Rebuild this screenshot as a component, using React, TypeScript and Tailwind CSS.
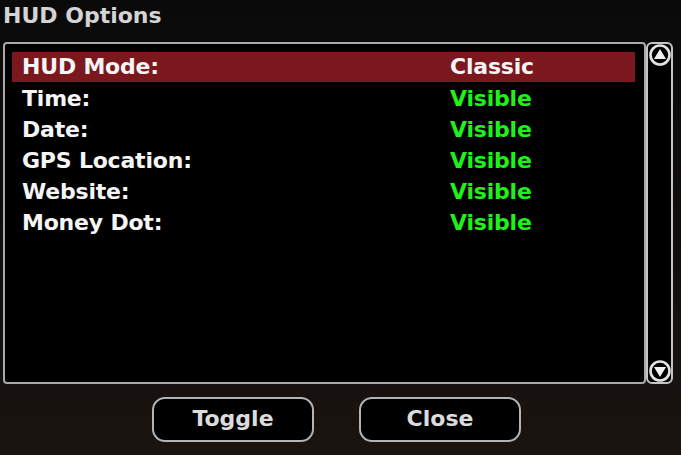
import React from "react";

type Row = { label: string; value: string; selected?: boolean };

const rows: Row[] = [
  { label: "HUD Mode:", value: "Classic", selected: true },
  { label: "Time:", value: "Visible" },
  { label: "Date:", value: "Visible" },
  { label: "GPS Location:", value: "Visible" },
  { label: "Website:", value: "Visible" },
  { label: "Money Dot:", value: "Visible" },
];

function ArrowButton({ dir }: { dir: "up" | "down" }) {
  return (
    <svg width="22" height="22" viewBox="0 0 22 22" className="block">
      <circle cx="11" cy="11" r="9.5" fill="#000" stroke="#e2e2e2" strokeWidth="2.6" />
      {dir === "up" ? (
        <polygon points="11,5 17,15 5,15" fill="#f0f0f0" />
      ) : (
        <polygon points="5,7 17,7 11,17" fill="#f0f0f0" />
      )}
    </svg>
  );
}

function MenuButton({ label }: { label: string }) {
  return (
    <div className="w-[162px] h-[45px] rounded-[13px] border-2 border-[#b4b4b4] bg-black flex items-center justify-center text-[22px] font-bold text-[#dcdcdc] leading-none pb-[2px]">
      {label}
    </div>
  );
}

export default function App() {
  return (
    <div
      className="w-[681px] h-[455px] overflow-hidden bg-[#0d0c0b] bg-gradient-to-b from-[#0b0a0a] via-[#0f0e0d] to-[#1a1410] flex flex-col"
      style={{ fontFamily: '"DejaVu Sans", Verdana, sans-serif' }}
    >
      <div className="pl-[3px] pt-[2px] h-[42px] text-[22px] font-bold text-[#d4d4d4] leading-[28px]">
        HUD Options
      </div>

      <div className="flex ml-[3px] h-[342px]">
        <div className="w-[643px] h-full border-2 border-[#a9a9a9] rounded-[4px] bg-black pt-[8px] pl-[7px] pr-[9px]">
          {rows.map((r) => (
            <div
              key={r.label}
              className={
                r.selected
                  ? "h-[30px] mb-[1px] flex items-center bg-[#7b181d] text-[22px] font-bold leading-none tracking-[-0.2px]"
                  : "h-[31px] flex items-center text-[22px] font-bold leading-none tracking-[-0.2px]"
              }
            >
              <div className="w-[438px] pl-[10px] text-[#f5f5f5]">{r.label}</div>
              <div className={r.selected ? "text-[#f5f5f5]" : "text-[#1ef21a]"}>{r.value}</div>
            </div>
          ))}
        </div>
        <div className="w-[27px] h-full border-2 border-[#c4c4c4] rounded-[6px] bg-black flex flex-col items-center justify-between">
          <ArrowButton dir="up" />
          <ArrowButton dir="down" />
        </div>
      </div>

      <div className="flex justify-center gap-[45px] mt-[13px] w-[673px]">
        <MenuButton label="Toggle" />
        <MenuButton label="Close" />
      </div>
    </div>
  );
}
